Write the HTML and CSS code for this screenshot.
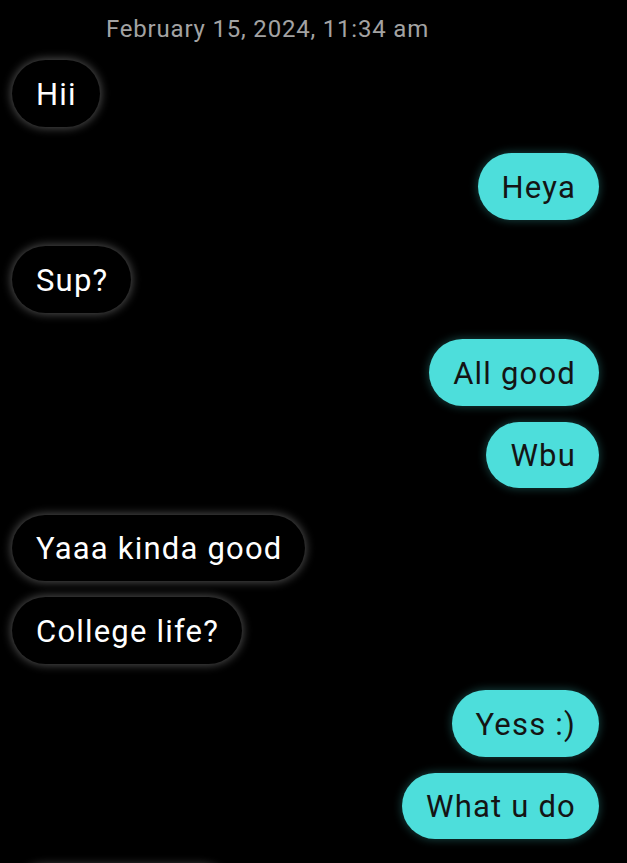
FILE: index.html
```html
<!DOCTYPE html>
<html lang="en">
<head>
<meta charset="utf-8">
<title>Chat</title>
<link rel="stylesheet" href="styles.css">
</head>
<body>
<div class="chat">
  <div class="stamp">February 15, 2024, 11:34 am</div>
  <div class="msg in first"><span class="bubble">Hii</span></div>
  <div class="msg out switch"><span class="bubble">Heya</span></div>
  <div class="msg in switch"><span class="bubble">Sup?</span></div>
  <div class="msg out switch"><span class="bubble">All good</span></div>
  <div class="msg out"><span class="bubble">Wbu</span></div>
  <div class="msg in switch"><span class="bubble">Yaaa kinda good</span></div>
  <div class="msg in"><span class="bubble">College life?</span></div>
  <div class="msg out switch"><span class="bubble">Yess :)</span></div>
  <div class="msg out"><span class="bubble">What u do</span></div>
  <div class="msg in switch"><span class="bubble">Engineering</span></div>
</div>
</body>
</html>
```

FILE: styles.css
```css
html, body {
  margin: 0;
  padding: 0;
  background: #000;
  height: 100%;
  overflow: hidden;
}
.chat {
  display: flex;
  flex-direction: column;
  font-family: Roboto, "Noto Sans", sans-serif;
  padding: 0 28px 0 12px;
}
.stamp {
  color: #a3a3a3;
  font-size: 24px;
  line-height: 28px;
  padding: 15px 0 0 94px;
  letter-spacing: 0.8px;
}
.msg {
  display: flex;
  margin-top: 16px;
}
.msg.switch {
  margin-top: 26.5px;
}
.msg.first {
  margin-top: 17px;
}
.msg.in {
  justify-content: flex-start;
}
.msg.out {
  justify-content: flex-end;
}
.bubble {
  display: block;
  height: 66.5px;
  box-sizing: border-box;
  padding: 1.5px 23px 0 24px;
  border-radius: 34px;
  font-size: 31px;
  line-height: 65px;
  letter-spacing: 1.2px;
  white-space: nowrap;
}
.in .bubble {
  background: #000;
  color: #fff;
  box-shadow: 0 0 10px 1px rgba(255, 255, 255, 0.32);
}
.out .bubble {
  background: #4ddedb;
  color: #141414;
  box-shadow: 0 0 8px 1px rgba(77, 222, 219, 0.28);
}
```
